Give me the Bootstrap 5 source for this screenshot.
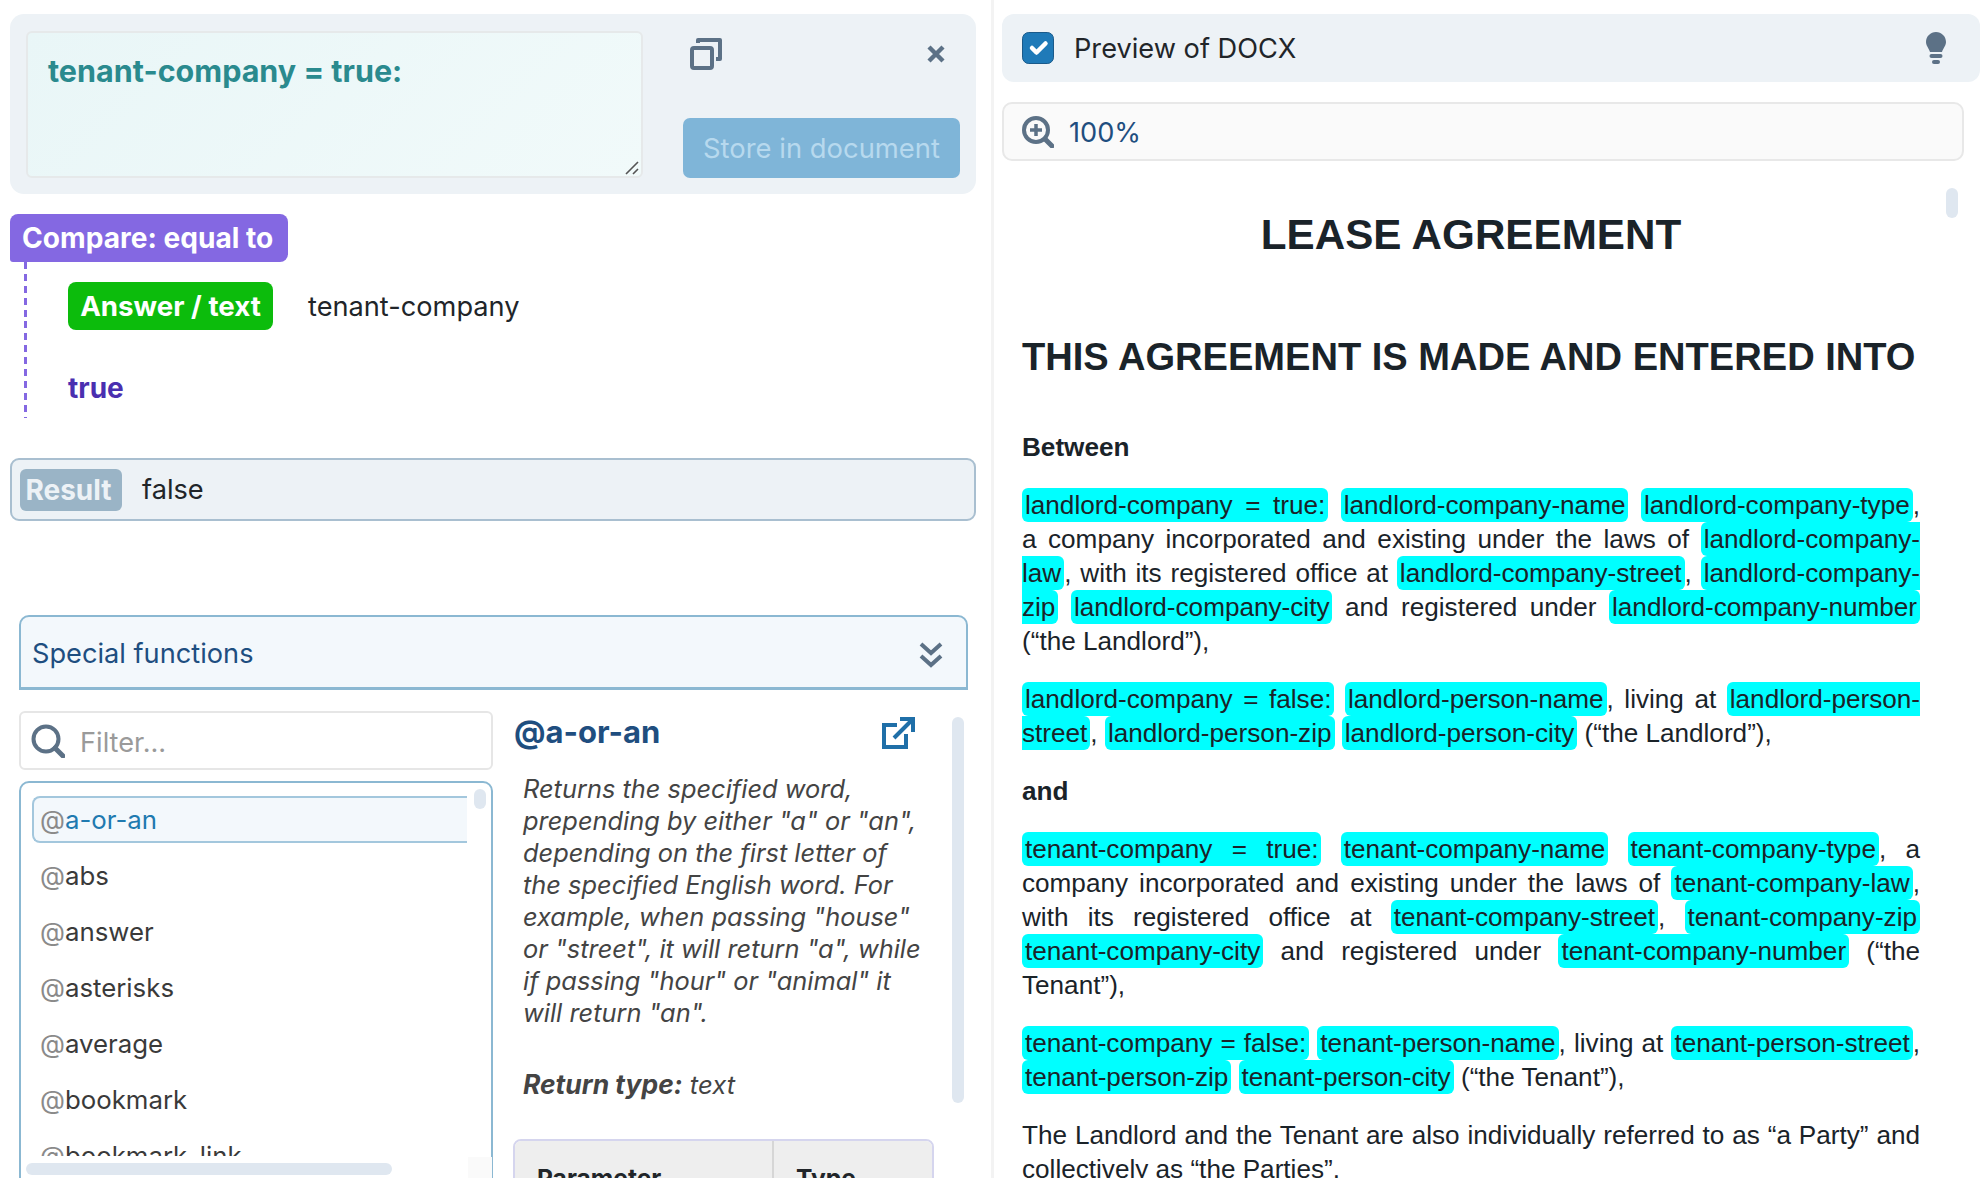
<!DOCTYPE html>
<html lang="en">
<head>
  <meta charset="UTF-8" />
  <meta name="viewport" content="width=device-width, initial-scale=1" />
  <title>Preview of DOCX</title>
  <link href="https://cdn.jsdelivr.net/npm/bootstrap@5.3.0/dist/css/bootstrap.min.css" rel="stylesheet" />
  <style>
    html, body { height: 100%; overflow: hidden; }
    body { font-family: Inter, "Liberation Sans", sans-serif; font-size: 27.2px; color: #212529; background: #fff; }
    svg { display: block; flex: none; }
    .app-shell { height: 1178px; overflow: hidden; }
    .left-pane { width: 994px; flex: none; padding: 14px 15px 0 10px; border-right: 3px solid #f3f3f3; }
    .right-pane { width: 992px; flex: none; padding: 14px 6px 0 8px; position: relative; }

    .edit-panel { height: 180px; padding: 17px 16px 16px; background: #edf2f6; border-radius: 14px; gap: 40px; }
    .expr-wrap { position: relative; width: 617px; height: 147px; flex: none; }
    .expr-input { width: 100%; height: 100%; padding: 14px 20px; font-size: 30.5px; font-weight: 700; line-height: 48px; color: #2a8a8e; background: linear-gradient(135deg, #e9f6f7, #f1fafa); border: 2px solid #e6e9ea; border-radius: 6px; resize: none; }
    .expr-input:focus { color: #2a8a8e; background: linear-gradient(135deg, #e9f6f7, #f1fafa); border-color: #e6e9ea; box-shadow: none; }
    .resize-grip { position: absolute; right: 4px; bottom: 3px; }
    .edit-side { width: 277px; flex: none; }
    .edit-icons { padding: 7px 15px 0 7px; }
    .close-icon { margin-top: 7px; }
    .store-btn { height: 60px; padding: 2px 0 0; font-size: 27.4px; color: #b7d9ee; background: #7fb5d8; border: 0; border-radius: 7px; }
    .store-btn:disabled { color: #b7d9ee; background: #7fb5d8; opacity: 1; }

    .compare-tag, .answer-tag { display: inline-block; height: 48px; font-weight: 700; line-height: 48px; color: #fff; border-radius: 8px; white-space: nowrap; }
    .compare-tag { width: 278px; margin-top: 20px; padding-left: 12px; font-size: 28.1px; background: #8468e2; border-bottom-left-radius: 3px; }
    .compare-body { height: 156px; margin-left: 14px; padding: 20px 0 0 44px; background: repeating-linear-gradient(#8468e2 0 7px, transparent 7px 11.9px) left top / 3px 100% no-repeat; }
    .answer-tag { width: 205px; font-size: 27.7px; line-height: 48px; text-align: center; background: #0cbc0c; }
    .answer-name { margin-left: 35px; padding-top: 2px; }
    .true-val { margin-top: 34px; font-size: 28px; line-height: 48px; font-weight: 700; color: #4a2fb0; }

    .result-bar { height: 63px; margin-top: 40px; padding-left: 8px; background: #edf2f6; border: 2px solid #a9bfd0; border-radius: 9px; gap: 20px; }
    .result-tag { width: 102px; height: 42px; padding-right: 5px; font-size: 28px; font-weight: 700; line-height: 42px; text-align: center; color: #edf2f6; background: #9ab4c6; border-radius: 6px; }
    .result-val { padding-top: 2px; }

    .fn-block { margin: 94px 8px 0 9px; }
    .fn-head { height: 75px; padding: 5px 23px 0 11px; color: #1e4e80; background: #f3f8fc; border: 2px solid #8bb8d2; border-bottom-width: 3px; border-radius: 10px 10px 0 0; }
    .fn-cols { margin-top: 21px; gap: 21px; }
    .fn-left { width: 474px; flex: none; }
    .fn-right { flex: 1; position: relative; }

    .filter-box { height: 59px; padding-left: 10px; background: #fff; border: 2px solid #e6e6e6; border-radius: 6px; gap: 15px; }
    .filter-input { padding: 5px 0 0; font-size: 27.2px; border: 0; }
    .filter-input::placeholder { color: #9a9a9a; }
    .filter-input:focus { box-shadow: none; }

    .fn-list-box { position: relative; height: 420px; margin-top: 11px; padding: 13px 0 0 11px; border: 2px solid #8bb8d2; border-radius: 10px 10px 0 0; }
    .fn-list-clip { width: 435px; height: 360px; overflow: hidden; }
    .list-group-flush > .fn-item { height: 47px; margin-bottom: 9px; padding: 0 0 0 6px; font-size: 25.8px; line-height: 43px; color: #3a3a3a; border: 2px solid transparent; background: transparent; }
    .list-group-flush > .fn-item.fn-active { line-height: 43px; color: #1f7ab0; background: #f3f8fc; border-color: #a3c7dd; border-right: 0; border-radius: 8px 0 0 8px; }
    .at-sign { color: #8a8a8a; }
    .thumb { position: absolute; background: #dfe7f0; border-radius: 7px; }
    .thumb-list-v { left: 453px; top: 6px; width: 12px; height: 20px; }
    .thumb-list-h { left: 5px; top: 380px; width: 366px; height: 12px; }
    .list-corner { position: absolute; left: 447px; top: 374px; width: 24px; height: 24px; background: #fafafa; }
    .thumb-desc { right: 4px; top: 6px; width: 12px; height: 386px; }
    .thumb-doc { left: 952px; top: 188px; width: 12px; height: 30px; }

    .fn-title { height: 46px; width: 401px; padding-top: 1px; font-size: 31px; line-height: 40px; font-weight: 700; color: #1f4e7f; margin: 0; }
    .fn-icon { margin-top: 5px; }
    .fn-desc { width: 405px; margin: 16px 0 0 9px; font-size: 25.4px; line-height: 32px; font-style: italic; color: #444; }
    .fn-return { margin: 39px 0 0 9px; font-size: 25.7px; line-height: 32px; font-style: italic; color: #444; }
    .fn-return b { font-size: 26.4px; }
    .param-table { width: 421px; margin: 38px 0 0 -1px; font-size: 24.6px; border: 2px solid #d5d5ee; border-radius: 8px 8px 0 0; border-collapse: separate; border-spacing: 0; overflow: hidden; }
    .param-table th { height: 70px; padding: 19px 22px; font-weight: 700; background: #eee; border: 0; vertical-align: top; }
    .param-table th:first-child { width: 259px; border-right: 2px solid #d6d6d6; }

    .preview-head { height: 68px; padding: 0 34px 0 20px; background: #edf2f6; border-radius: 12px; gap: 20px; }
    .preview-title { padding-top: 2px; }
    .preview-check { width: 32px; height: 32px; margin: 0; flex: none; background-color: #1f7ab8; border: 1px solid #1a5a8a; border-radius: 6px; }
    .preview-check:checked { background-color: #1f7ab8; border-color: #1a5a8a; }
    .zoom-bar { width: 962px; height: 59px; margin: 20px 0 0; padding-left: 18px; color: #1f4e7f; background: #fafafa; border: 2px solid #e8e8e8; border-radius: 10px; gap: 15px; }
    .zoom-val { padding-top: 4px; }

    .doc-page { width: 898px; margin-left: 20px; font-family: "Liberation Sans", Arial, sans-serif; font-size: 26.13px; line-height: 34px; color: #1a2329; }
    .doc-title { margin: 49px 0 0; font-size: 42.2px; line-height: 50px; font-weight: 700; text-align: center; }
    .doc-sub { margin: 74px 0 50px; font-size: 38.1px; line-height: 46px; font-weight: 700; white-space: nowrap; }
    .doc-page p { margin: 0 0 24px; text-align: justify; }
    .fld { padding: 2px 3px; background: #00ffff; border-radius: 6px; }
  </style>
</head>
<body>
  <div class="app-shell d-flex">
    <div class="left-pane">
      <div class="edit-panel d-flex">
        <div class="expr-wrap">
          <textarea class="form-control expr-input" spellcheck="false">tenant-company = true:</textarea>
          <svg class="resize-grip" width="14" height="14" viewBox="0 0 14 14" fill="none" stroke="#555" stroke-width="1.6"><path d="M1 13L13 1M8 13L13 8"/></svg>
        </div>
        <div class="edit-side d-flex flex-column justify-content-between">
          <div class="edit-icons d-flex justify-content-between">
            <svg width="32" height="32" viewBox="0 0 32 32" fill="none" stroke="#5c7186" stroke-width="4"><rect x="2" y="10" width="20" height="20" rx="2"/><path d="M8 5V2H30V21H26" stroke-linejoin="round"/></svg>
            <svg class="close-icon" width="18" height="18" viewBox="0 0 18 18" fill="none" stroke="#5c7186" stroke-width="4.4"><path d="M2 2L16 16M16 2L2 16"/></svg>
          </div>
          <button class="btn store-btn w-100" disabled>Store in document</button>
        </div>
      </div>

      <span class="compare-tag">Compare: equal to</span>
      <div class="compare-body">
        <div class="d-flex align-items-center">
          <span class="answer-tag">Answer / text</span>
          <span class="answer-name">tenant-company</span>
        </div>
        <div class="true-val">true</div>
      </div>

      <div class="result-bar d-flex align-items-center">
        <span class="result-tag">Result</span>
        <span class="result-val">false</span>
      </div>

      <div class="fn-block">
        <div class="fn-head d-flex align-items-center justify-content-between">
          <span>Special functions</span>
          <svg width="24" height="26" viewBox="0 0 24 26" fill="none" stroke="#5c7186" stroke-width="4"><path d="M2 2L12 11L22 2M2 14L12 23L22 14"/></svg>
        </div>
        <div class="fn-cols d-flex">
          <div class="fn-left">
            <div class="filter-box d-flex align-items-center">
              <svg width="34" height="34" viewBox="0 0 34 34" fill="none" stroke="#5c7186" stroke-width="4"><circle cx="15" cy="15" r="12.5"/><path d="M24 24L32 32" stroke-width="5" stroke-linecap="round"/></svg>
              <input class="form-control filter-input" placeholder="Filter..." />
            </div>
            <div class="fn-list-box">
              <div class="fn-list-clip">
                <ul class="list-group list-group-flush">
                  <li class="list-group-item fn-item fn-active"><span class="at-sign">@</span>a-or-an</li>
                  <li class="list-group-item fn-item"><span class="at-sign">@</span>abs</li>
                  <li class="list-group-item fn-item"><span class="at-sign">@</span>answer</li>
                  <li class="list-group-item fn-item"><span class="at-sign">@</span>asterisks</li>
                  <li class="list-group-item fn-item"><span class="at-sign">@</span>average</li>
                  <li class="list-group-item fn-item"><span class="at-sign">@</span>bookmark</li>
                  <li class="list-group-item fn-item"><span class="at-sign">@</span>bookmark_link</li>
                </ul>
              </div>
              <div class="thumb thumb-list-v"></div>
              <div class="list-corner"></div>
              <div class="thumb thumb-list-h"></div>
            </div>
          </div>
          <div class="fn-right">
            <div class="fn-title d-flex justify-content-between align-items-start">
              <span>@a-or-an</span>
              <svg class="fn-icon" width="33" height="32" viewBox="0 0 33 32" fill="none" stroke="#1f6fa8" stroke-width="4"><path d="M15 8H2V30H24V17"/><path d="M12 21L30 3M18 2H31V15" /></svg>
            </div>
            <div class="fn-desc">Returns the specified word, prepending by either "a" or "an", depending on the first letter of the specified English word. For example, when passing "house" or "street", it will return "a", while if passing "hour" or "animal" it will return "an".</div>
            <div class="fn-return"><b>Return type:</b> text</div>
            <table class="table param-table">
              <thead><tr><th>Parameter</th><th>Type</th></tr></thead>
            </table>
            <div class="thumb thumb-desc"></div>
          </div>
        </div>
      </div>
    </div>

    <div class="right-pane">
      <div class="preview-head d-flex align-items-center">
        <input class="form-check-input preview-check" type="checkbox" checked />
        <span class="preview-title flex-grow-1">Preview of DOCX</span>
        <svg width="20" height="32" viewBox="0 0 20 32" fill="#5c7186"><path d="M10 0C4.5 0 0 4.4 0 10c0 3.6 2.6 6 4 10h12c1.4-4 4-6.4 4-10C20 4.4 15.5 0 10 0z"/><rect x="3.5" y="22" width="13" height="4" rx="2"/><rect x="6" y="28" width="8" height="4" rx="2"/></svg>
      </div>
      <div class="zoom-bar d-flex align-items-center">
        <svg width="32" height="32" viewBox="0 0 32 32" fill="none" stroke="#5c7186" stroke-width="4"><circle cx="14" cy="14" r="12"/><path d="M14 8V20M8 14H20" stroke-width="3.5"/><path d="M23 23L30 30" stroke-width="5" stroke-linecap="round"/></svg>
        <span class="zoom-val">100%</span>
      </div>
      <div class="thumb thumb-doc"></div>
      <div class="doc-page">
        <h1 class="doc-title">LEASE AGREEMENT</h1>
        <h2 class="doc-sub">THIS AGREEMENT IS MADE AND ENTERED INTO</h2>
        <p><b>Between</b></p>
        <p><span class="fld">landlord-company = true:</span> <span class="fld">landlord-company-name</span> <span class="fld">landlord-company-type</span>, a&nbsp;company incorporated and existing under the laws of <span class="fld">landlord-company-law</span>, with its registered office at <span class="fld">landlord-company-street</span>, <span class="fld">landlord-company-zip</span> <span class="fld">landlord-company-city</span> and registered under <span class="fld">landlord-company-number</span> (“the&nbsp;Landlord”),</p>
        <p><span class="fld">landlord-company = false:</span> <span class="fld">landlord-person-name</span>, living at <span class="fld">landlord-person-street</span>, <span class="fld">landlord-person-zip</span> <span class="fld">landlord-person-city</span> (“the Landlord”),</p>
        <p><b>and</b></p>
        <p><span class="fld">tenant-company = true:</span> <span class="fld">tenant-company-name</span> <span class="fld">tenant-company-type</span>, a company incorporated and existing under the laws of <span class="fld">tenant-company-law</span>, with its registered office at <span class="fld">tenant-company-street</span>, <span class="fld">tenant-company-zip</span> <span class="fld">tenant-company-city</span> and registered under <span class="fld">tenant-company-number</span> (“the Tenant”),</p>
        <p><span class="fld">tenant-company = false:</span> <span class="fld">tenant-person-name</span>, living at <span class="fld">tenant-person-street</span>, <span class="fld">tenant-person-zip</span> <span class="fld">tenant-person-city</span> (“the Tenant”),</p>
        <p>The Landlord and the Tenant are also individually referred to as “a Party” and collectively as “the Parties”.</p>
      </div>
    </div>
  </div>
  <script src="https://cdn.jsdelivr.net/npm/bootstrap@5.3.0/dist/js/bootstrap.bundle.min.js"></script>
</body>
</html>
